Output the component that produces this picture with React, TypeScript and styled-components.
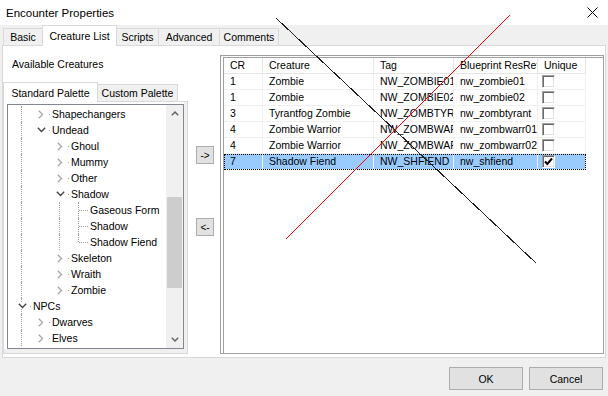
import styled, { createGlobalStyle } from "styled-components";

const GlobalStyle = createGlobalStyle`
  html, body {
    margin: 0;
    padding: 0;
  }
  body {
    background: #f0f0f0;
    font-family: "Liberation Sans", Arial, sans-serif;
    font-size: 10.5px;
    color: #000;
  }
  * {
    box-sizing: border-box;
  }
`;

const Window = styled.div`
  position: relative;
  width: 608px;
  height: 396px;
  background: #f0f0f0;
  display: flex;
  flex-direction: column;
  overflow: hidden;
`;

const TitleBar = styled.div`
  flex: none;
  height: 25px;
  background: #fff;
  display: flex;
  align-items: center;
  justify-content: space-between;
  padding: 0 10px 0 6px;
`;

const Title = styled.span`
  font-size: 11.5px;
`;

const TabStrip = styled.div`
  flex: none;
  height: 20px;
  display: flex;
  align-items: flex-end;
  padding-left: 3px;
`;

const Tab = styled.div<{ $w: number; $active?: boolean }>`
  position: relative;
  z-index: ${(p) => (p.$active ? 1 : 0)};
  width: ${(p) => p.$w}px;
  height: ${(p) => (p.$active ? "21px" : "17px")};
  margin-right: -1px;
  margin-bottom: ${(p) => (p.$active ? "-1px" : "0")};
  background: ${(p) => (p.$active ? "#fff" : "#f0f0f0")};
  border: 1px solid #d9d9d9;
  border-bottom: none;
  display: flex;
  align-items: center;
  justify-content: center;
  white-space: nowrap;
`;

const PaletteTab = styled(Tab)`
  height: ${(p) => (p.$active ? "20px" : "17px")};
`;

const TabPage = styled.div`
  flex: none;
  height: 313px;
  margin: 0 2px;
  background: #fff;
  border: 1px solid #d9d9d9;
  display: flex;
  padding-right: 1px;
`;

const LeftColumn = styled.div`
  width: 185px;
  flex: none;
  display: flex;
  flex-direction: column;
  padding-top: 10px;
`;

const SectionLabel = styled.div`
  line-height: 16px;
  padding-left: 9px;
  margin-bottom: 10px;
`;

const PaletteTabStrip = styled.div`
  height: 19px;
  display: flex;
  align-items: flex-end;
`;

const PaletteBody = styled.div`
  flex: 1;
  display: flex;
  margin-bottom: 3px;
  background: #fff;
  border: 1px solid #d9d9d9;
  padding: 2px 3px 4px 3px;
  box-shadow: inset -3px -4px 0 #f0f0f0;
`;

const TreeBox = styled.div`
  flex: 1;
  display: flex;
  background: #fff;
  border: 1px solid #828790;
`;

const TreeList = styled.div`
  flex: 1;
  overflow: hidden;
  padding: 1px 0 0 4px;
`;

const TreeRow = styled.div`
  height: 16px;
  display: flex;
  white-space: nowrap;
`;

const Indent = styled.span<{ $line: boolean }>`
  position: relative;
  flex: none;
  width: 19px;
  &::before {
    content: "";
    display: ${(p) => (p.$line ? "block" : "none")};
    position: absolute;
    left: 9px;
    top: 0;
    bottom: 0;
    border-left: 1px dotted #a0a0a0;
  }
`;

const ToggleCell = styled.span<{ $line: "full" | "half" | "none"; $tickFrom: number }>`
  position: relative;
  flex: none;
  width: 19px;
  display: flex;
  align-items: center;
  justify-content: center;
  &::before {
    content: "";
    display: ${(p) => (p.$line === "none" ? "none" : "block")};
    position: absolute;
    left: 9px;
    top: 0;
    height: ${(p) => (p.$line === "half" ? "8px" : "16px")};
    border-left: 1px dotted #a0a0a0;
  }
  &::after {
    content: "";
    position: absolute;
    left: ${(p) => p.$tickFrom}px;
    right: 0;
    top: 8px;
    border-top: 1px dotted #a0a0a0;
  }
`;

const Chevron = styled.svg`
  position: relative;
  z-index: 1;
  background: #fff;
  margin-left: 1px;
`;

const TreeLabel = styled.span`
  padding-left: 2px;
  line-height: 16px;
`;

const Scrollbar = styled.div`
  flex: none;
  width: 17px;
  background: #f0f0f0;
  display: flex;
  flex-direction: column;
`;

const ScrollButton = styled.div`
  height: 17px;
  flex: none;
  display: flex;
  align-items: center;
  justify-content: center;
`;

const ScrollTrack = styled.div`
  flex: 1;
  display: flex;
  flex-direction: column;
`;

const ScrollThumb = styled.div`
  margin: 75px 1px 0 1px;
  height: 91px;
  background: #cdcdcd;
`;

const MoveButtons = styled.div`
  flex: none;
  width: 18px;
  margin: 0 6px 0 8px;
  padding-top: 100px;
  display: flex;
  flex-direction: column;
  gap: 54px;
`;

const SmallButton = styled.button`
  width: 18px;
  height: 18px;
  padding: 0;
  background: #e1e1e1;
  border: 1px solid #adadad;
  font: inherit;
  font-size: 10px;
  color: #000;
  display: flex;
  align-items: center;
  justify-content: center;
`;

const ListFrame = styled.div`
  flex: 1;
  display: flex;
  margin: 9px 0 3px 0;
  border: 1px solid #a0a0a0;
  padding: 1px 0 0 2px;
  background: #fff;
`;

const ListView = styled.div`
  flex: 1;
  display: flex;
  flex-direction: column;
  align-items: flex-start;
  border-left: 1px solid #a0a0a0;
  border-top: 1px solid #a0a0a0;
`;

const HeaderRow = styled.div`
  display: flex;
  height: 16px;
`;

const HeaderCell = styled.div<{ $w: number }>`
  width: ${(p) => p.$w}px;
  flex: none;
  padding-left: 6px;
  line-height: 15px;
  border-right: 1px solid #e5e5e5;
  border-bottom: 1px solid #e5e5e5;
  overflow: hidden;
  white-space: nowrap;
`;

const DataRow = styled.div<{ $selected?: boolean }>`
  display: flex;
  height: 16px;
  background: ${(p) => (p.$selected ? "#99cbff" : "transparent")};
  outline: ${(p) => (p.$selected ? "1px dotted #000" : "none")};
  outline-offset: -1px;
`;

const DataCell = styled.div<{ $w: number }>`
  width: ${(p) => p.$w}px;
  flex: none;
  padding-left: 6px;
  line-height: 15px;
  border-right: 1px solid #f0f0f0;
  border-bottom: 1px solid #f0f0f0;
  overflow: hidden;
  white-space: nowrap;
`;

const CheckCell = styled(DataCell)`
  padding-left: 4px;
  display: flex;
  align-items: center;
`;

const CheckBox = styled.span`
  width: 13px;
  height: 13px;
  background: #fff;
  border: 1px solid;
  border-color: #a0a0a0 #ffffff #ffffff #a0a0a0;
  box-shadow: inset 1px 1px 0 #696969, inset -1px -1px 0 #e3e3e3;
  display: flex;
  align-items: center;
  justify-content: center;
`;

const Footer = styled.div`
  flex: none;
  height: 38px;
  display: flex;
  justify-content: flex-end;
  align-items: flex-start;
  gap: 6px;
  padding: 9px 5px 0 0;
`;

const DialogButton = styled.button`
  width: 74px;
  height: 23px;
  padding: 0;
  background: #e1e1e1;
  border: 1px solid #adadad;
  font: inherit;
  color: #000;
`;

const Annotations = styled.svg`
  position: absolute;
  left: 0;
  top: 0;
  pointer-events: none;
`;

type TreeItem = {
  label: string;
  depth: number;
  state: "open" | "closed" | "leaf";
  guides: boolean[];
  line?: "full" | "half" | "none";
};

const tree: TreeItem[] = [
  { label: "Shapechangers", depth: 1, state: "closed", guides: [true] },
  { label: "Undead", depth: 1, state: "open", guides: [true] },
  { label: "Ghoul", depth: 2, state: "closed", guides: [true, false] },
  { label: "Mummy", depth: 2, state: "closed", guides: [true, false] },
  { label: "Other", depth: 2, state: "closed", guides: [true, false] },
  { label: "Shadow", depth: 2, state: "open", guides: [true, false] },
  { label: "Gaseous Form", depth: 3, state: "leaf", guides: [true, false, true], line: "full" },
  { label: "Shadow", depth: 3, state: "leaf", guides: [true, false, true], line: "full" },
  { label: "Shadow Fiend", depth: 3, state: "leaf", guides: [true, false, true], line: "half" },
  { label: "Skeleton", depth: 2, state: "closed", guides: [true, false] },
  { label: "Wraith", depth: 2, state: "closed", guides: [true, false] },
  { label: "Zombie", depth: 2, state: "closed", guides: [true, false] },
  { label: "NPCs", depth: 0, state: "open", guides: [], line: "full" },
  { label: "Dwarves", depth: 1, state: "closed", guides: [true] },
  { label: "Elves", depth: 1, state: "closed", guides: [true] },
];

const columns = [
  { title: "CR", w: 39 },
  { title: "Creature", w: 111 },
  { title: "Tag", w: 80 },
  { title: "Blueprint ResRef", w: 84 },
  { title: "Unique", w: 48 },
];

const creatures: [string, string, string, string, boolean][] = [
  ["1", "Zombie", "NW_ZOMBIE01", "nw_zombie01", false],
  ["1", "Zombie", "NW_ZOMBIE02", "nw_zombie02", false],
  ["3", "Tyrantfog Zombie", "NW_ZOMBTYRANT", "nw_zombtyrant", false],
  ["4", "Zombie Warrior", "NW_ZOMBWARR01", "nw_zombwarr01", false],
  ["4", "Zombie Warrior", "NW_ZOMBWARR02", "nw_zombwarr02", false],
  ["7", "Shadow Fiend", "NW_SHFIEND", "nw_shfiend", true],
];

function Toggle({ item }: { item: TreeItem }) {
  if (item.state === "leaf") {
    return <ToggleCell $line={item.line ?? "full"} $tickFrom={10} />;
  }
  return (
    <ToggleCell $line={item.line ?? "none"} $tickFrom={18}>
      {item.state === "open" ? (
        <Chevron width="9" height="6" viewBox="0 0 9 6">
          <polyline points="0.8,0.8 4.5,4.5 8.2,0.8" fill="none" stroke="#404040" strokeWidth="1.3" />
        </Chevron>
      ) : (
        <Chevron width="6" height="9" viewBox="0 0 6 9">
          <polyline points="0.8,0.8 4.5,4.5 0.8,8.2" fill="none" stroke="#a6a6a6" strokeWidth="1.3" />
        </Chevron>
      )}
    </ToggleCell>
  );
}

export default function App() {
  return (
    <Window>
      <GlobalStyle />
      <TitleBar>
        <Title>Encounter Properties</Title>
        <svg width="11" height="11" viewBox="0 0 11 11">
          <path d="M0.5 0.5 L10.5 10.5 M10.5 0.5 L0.5 10.5" stroke="#000" strokeWidth="1" />
        </svg>
      </TitleBar>

      <TabStrip>
        <Tab $w={40}>Basic</Tab>
        <Tab $w={75} $active>
          Creature List
        </Tab>
        <Tab $w={43}>Scripts</Tab>
        <Tab $w={62}>Advanced</Tab>
        <Tab $w={60}>Comments</Tab>
      </TabStrip>

      <TabPage>
        <LeftColumn>
          <SectionLabel>Available Creatures</SectionLabel>
          <PaletteTabStrip>
            <PaletteTab $w={95} $active>
              Standard Palette
            </PaletteTab>
            <PaletteTab $w={81}>Custom Palette</PaletteTab>
          </PaletteTabStrip>
          <PaletteBody>
            <TreeBox>
              <TreeList>
                {tree.map((item, i) => (
                  <TreeRow key={i}>
                    {item.guides.map((g, k) => (
                      <Indent key={k} $line={g} />
                    ))}
                    <Toggle item={item} />
                    <TreeLabel>{item.label}</TreeLabel>
                  </TreeRow>
                ))}
              </TreeList>
              <Scrollbar>
                <ScrollButton>
                  <svg width="8" height="5" viewBox="0 0 8 5">
                    <polyline points="0.8,4.2 4,1 7.2,4.2" fill="none" stroke="#606060" strokeWidth="1.4" />
                  </svg>
                </ScrollButton>
                <ScrollTrack>
                  <ScrollThumb />
                </ScrollTrack>
                <ScrollButton>
                  <svg width="8" height="5" viewBox="0 0 8 5">
                    <polyline points="0.8,0.8 4,4 7.2,0.8" fill="none" stroke="#606060" strokeWidth="1.4" />
                  </svg>
                </ScrollButton>
              </Scrollbar>
            </TreeBox>
          </PaletteBody>
        </LeftColumn>

        <MoveButtons>
          <SmallButton>-&gt;</SmallButton>
          <SmallButton>&lt;-</SmallButton>
        </MoveButtons>

        <ListFrame>
          <ListView>
            <HeaderRow>
              {columns.map((c) => (
                <HeaderCell key={c.title} $w={c.w}>
                  {c.title}
                </HeaderCell>
              ))}
            </HeaderRow>
            {creatures.map(([cr, name, tag, resref, unique], i) => (
              <DataRow key={i} $selected={i === creatures.length - 1}>
                <DataCell $w={columns[0].w}>{cr}</DataCell>
                <DataCell $w={columns[1].w}>{name}</DataCell>
                <DataCell $w={columns[2].w}>{tag}</DataCell>
                <DataCell $w={columns[3].w}>{resref}</DataCell>
                <CheckCell $w={columns[4].w}>
                  <CheckBox>
                    {unique && (
                      <svg width="9" height="9" viewBox="0 0 9 9">
                        <polyline points="1,4.5 3.3,7 8,1.5" fill="none" stroke="#000" strokeWidth="2" />
                      </svg>
                    )}
                  </CheckBox>
                </CheckCell>
              </DataRow>
            ))}
          </ListView>
        </ListFrame>
      </TabPage>

      <Footer>
        <DialogButton>OK</DialogButton>
        <DialogButton>Cancel</DialogButton>
      </Footer>

      <Annotations width="608" height="396" viewBox="0 0 608 396" shapeRendering="crispEdges">
        <line x1="276.5" y1="18.5" x2="536.5" y2="263.5" stroke="#202020" strokeWidth="1" />
        <line x1="509.5" y1="15.5" x2="285.5" y2="239.5" stroke="#ff0000" strokeWidth="1" />
      </Annotations>
    </Window>
  );
}
